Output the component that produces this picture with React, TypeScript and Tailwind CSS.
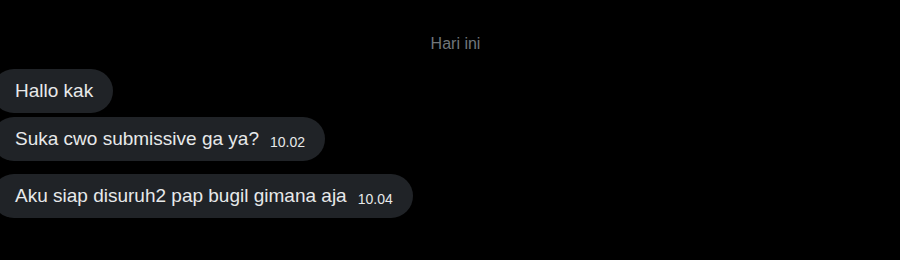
const messages = [
  { text: "Hallo kak", time: "", gapTop: "mt-0" },
  { text: "Suka cwo submissive ga ya?", time: "10.02", gapTop: "mt-[4px]" },
  { text: "Aku siap disuruh2 pap bugil gimana aja", time: "10.04", gapTop: "mt-[13px]" },
];

export default function App() {
  return (
    <div
      className="w-[900px] h-[260px] bg-black overflow-hidden"
      style={{ fontFamily: '"Liberation Sans", Arial, sans-serif' }}
    >
      <div className="pt-[34px] flex justify-center pl-[11px]">
        <span className="text-[16px] leading-[20px] text-[#71767b]">Hari ini</span>
      </div>
      <div className="mt-[15px] flex flex-col items-start">
        {messages.map((m, i) => (
          <div
            key={i}
            className={`${m.gapTop} ml-[-8px] h-[44px] rounded-[22px] bg-[#202327] pl-[23px] pr-[20px] flex items-center`}
          >
            <span className="text-[19px] text-[#e7e9ea]">{m.text}</span>
            {m.time && (
              <span className="ml-[11px] mt-[6px] text-[14px] text-[#e7e9ea]">{m.time}</span>
            )}
          </div>
        ))}
      </div>
    </div>
  );
}
